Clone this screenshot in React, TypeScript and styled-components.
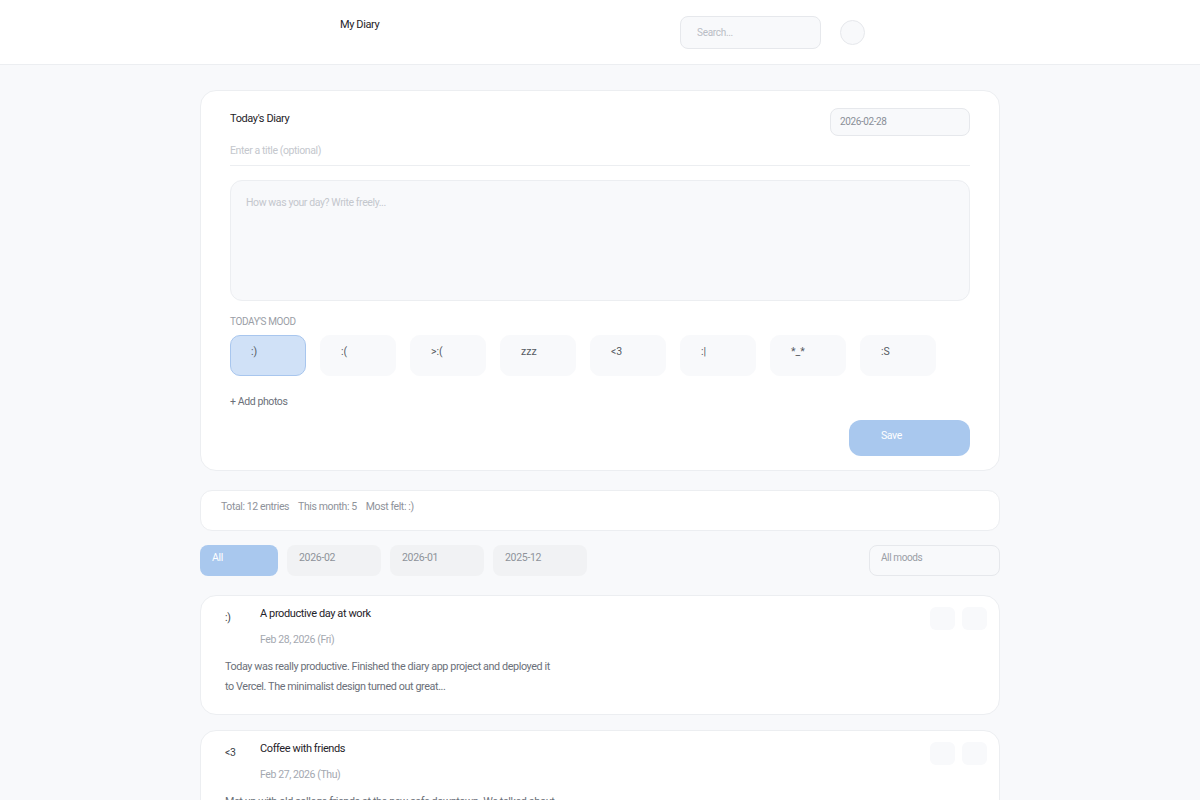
import styled, { createGlobalStyle } from 'styled-components';

const GlobalStyle = createGlobalStyle`
	body {
		margin: 0;
		background: #f8f9fb;
		font-family: Roboto, 'Liberation Sans', sans-serif;
		letter-spacing: -0.4px;
		color: #1f2329;
	}
`;

const moods = [':)', ':(', '>:(', 'zzz', '<3', ':|', '*_*', ':S'];
const months = ['2026-02', '2026-01', '2025-12'];

const entries = [
	{
		mood: ':)',
		title: 'A productive day at work',
		date: 'Feb 28, 2026 (Fri)',
		body: 'Today was really productive. Finished the diary app project and deployed it to Vercel. The minimalist design turned out great...',
	},
	{
		mood: '<3',
		title: 'Coffee with friends',
		date: 'Feb 27, 2026 (Thu)',
		body: 'Met up with old college friends at the new cafe downtown. We talked about everything from work to old memories...',
	},
];

const App = () => {
	return (
		<>
			<GlobalStyle />
			<Header>
				<HeaderInner>
					<Logo>My Diary</Logo>
					<HeaderRight>
						<Search placeholder='Search...' />
						<Avatar />
					</HeaderRight>
				</HeaderInner>
			</Header>

			<Main>
				<Card>
					<CardTop>
						<CardTitle>Today's Diary</CardTitle>
						<DateBox>2026-02-28</DateBox>
					</CardTop>
					<TitleInput placeholder='Enter a title (optional)' />
					<TextArea placeholder='How was your day? Write freely...' />
					<Label>Today's mood</Label>
					<MoodRow>
						{moods.map((m, i) => (
							<MoodButton key={m} $active={i === 0}>
								{m}
							</MoodButton>
						))}
					</MoodRow>
					<AddPhotos>+ Add photos</AddPhotos>
					<SaveRow>
						<SaveButton>Save</SaveButton>
					</SaveRow>
				</Card>

				<Stats>
					<span>Total: 12 entries</span>
					<span>This month: 5</span>
					<span>Most felt: :)</span>
				</Stats>

				<FilterRow>
					<Chips>
						<Chip $active $wide>
							All
						</Chip>
						{months.map((m) => (
							<Chip key={m}>{m}</Chip>
						))}
					</Chips>
					<MoodSelect>All moods</MoodSelect>
				</FilterRow>

				{entries.map((e) => (
					<Entry key={e.title}>
						<EntryHead>
							<EntryMood>{e.mood}</EntryMood>
							<EntryInfo>
								<EntryTitle>{e.title}</EntryTitle>
								<EntryDate>{e.date}</EntryDate>
							</EntryInfo>
							<Actions>
								<ActionBtn />
								<ActionBtn />
							</Actions>
						</EntryHead>
						<EntryBody>{e.body}</EntryBody>
					</Entry>
				))}
			</Main>
		</>
	);
};

export default App;

const Header = styled.header`
	height: 65px;
	background: #fff;
	border-bottom: 1px solid #eceef1;
	box-sizing: border-box;
`;

const HeaderInner = styled.div`
	width: 525px;
	margin-left: 340px;
	display: flex;
	justify-content: space-between;
	align-items: flex-start;
	padding-top: 16px;
`;

const Logo = styled.div`
	font-size: 11px;
	line-height: 17px;
	color: #1f2329;
`;

const HeaderRight = styled.div`
	display: flex;
	align-items: center;
	gap: 19px;
`;

const Search = styled.input`
	width: 141px;
	height: 33px;
	box-sizing: border-box;
	border: 1px solid #e6e8ec;
	border-radius: 8px;
	background: #f8f9fb;
	padding: 0 16px;
	font-family: inherit;
	font-size: 10px;
	letter-spacing: -0.3px;
	outline: none;

	&::placeholder {
		color: #b9bdc5;
	}
`;

const Avatar = styled.div`
	width: 25px;
	height: 25px;
	border-radius: 50%;
	border: 1px solid #e6e8ec;
	background: #f8f9fb;
	box-sizing: border-box;
`;

const Main = styled.main`
	width: 800px;
	margin: 0 auto;
	padding: 25px 0 40px;
	display: flex;
	flex-direction: column;
`;

const Card = styled.section`
	background: #fff;
	border: 1px solid #eceef1;
	border-radius: 16px;
	padding: 17px 29px 14px;
	display: flex;
	flex-direction: column;
`;

const CardTop = styled.div`
	display: flex;
	justify-content: space-between;
	align-items: flex-start;
`;

const CardTitle = styled.h2`
	margin: 4px 0 0;
	font-size: 11px;
	font-weight: 400;
	line-height: 14px;
	color: #1f2329;
`;

const DateBox = styled.div`
	width: 140px;
	height: 28px;
	box-sizing: border-box;
	border: 1px solid #e6e8ec;
	border-radius: 8px;
	background: #f8f9fb;
	padding: 6px 9px;
	font-size: 10px;
	line-height: 14px;
	color: #8a8f98;
`;

const TitleInput = styled.input`
	margin-top: 5px;
	height: 18px;
	border: none;
	border-bottom: 1px solid #eceef1;
	padding: 0 0 6px;
	font-family: inherit;
	font-size: 10.5px;
	letter-spacing: -0.4px;
	outline: none;
	background: transparent;

	&::placeholder {
		color: #c4c7cd;
	}
`;

const TextArea = styled.textarea`
	margin-top: 14px;
	height: 121px;
	box-sizing: border-box;
	border: 1px solid #eceef1;
	border-radius: 12px;
	background: #f8f9fb;
	padding: 15px 15px;
	font-family: inherit;
	font-size: 10.5px;
	letter-spacing: -0.4px;
	resize: none;
	outline: none;

	&::placeholder {
		color: #c4c7cd;
	}
`;

const Label = styled.div`
	margin-top: 15px;
	font-size: 10px;
	line-height: 12px;
	text-transform: uppercase;
	color: #9a9ea6;
`;

const MoodRow = styled.div`
	margin-top: 7px;
	display: flex;
	gap: 14px;
`;

const MoodButton = styled.button<{ $active?: boolean }>`
	width: 76px;
	height: 41px;
	box-sizing: border-box;
	border-radius: 10px;
	border: 1px solid ${(p) => (p.$active ? '#a8c6ee' : '#f8f9fb')};
	background: ${(p) => (p.$active ? '#d0e1f7' : '#f8f9fb')};
	padding: 8px 20px 0;
	text-align: left;
	align-self: flex-start;
	display: flex;
	align-items: flex-start;
	font-family: inherit;
	font-size: 10.5px;
	letter-spacing: 0;
	color: #555a62;
	line-height: 16px;
`;

const AddPhotos = styled.div`
	margin-top: 19px;
	font-size: 10.5px;
	line-height: 14px;
	color: #6b7079;
`;

const SaveRow = styled.div`
	display: flex;
	justify-content: flex-end;
	margin-top: 11px;
`;

const SaveButton = styled.button`
	width: 121px;
	height: 36px;
	border: none;
	border-radius: 12px;
	background: #a9c8ee;
	color: #fff;
	font-family: inherit;
	font-size: 10.5px;
	letter-spacing: -0.4px;
	text-align: left;
	padding: 0 0 6px 32px;
`;

const Stats = styled.div`
	margin-top: 19px;
	height: 41px;
	box-sizing: border-box;
	background: #fff;
	border: 1px solid #eceef1;
	border-radius: 12px;
	padding: 9px 20px;
	display: flex;
	gap: 9px;
	font-size: 10.5px;
	line-height: 14px;
	color: #8e929a;
`;

const FilterRow = styled.div`
	margin-top: 14px;
	display: flex;
	justify-content: space-between;
	align-items: center;
`;

const Chips = styled.div`
	display: flex;
	gap: 9px;
`;

const Chip = styled.button<{ $active?: boolean; $wide?: boolean }>`
	width: ${(p) => (p.$wide ? '78px' : '94px')};
	height: 31px;
	border: none;
	border-radius: 8px;
	background: ${(p) => (p.$active ? '#a9c8ee' : '#f1f2f4')};
	color: ${(p) => (p.$active ? '#fff' : '#8e929a')};
	font-family: inherit;
	font-size: 10.5px;
	letter-spacing: -0.3px;
	text-align: left;
	padding: 0 12px 6px;
`;

const MoodSelect = styled.div`
	width: 131px;
	height: 31px;
	box-sizing: border-box;
	border: 1px solid #e6e8ec;
	border-radius: 8px;
	background: #f8f9fb;
	padding: 5px 11px;
	font-size: 10px;
	line-height: 14px;
	color: #9a9ea6;
`;

const Entry = styled.article`
	margin-top: 19px;
	background: #fff;
	border: 1px solid #eceef1;
	border-radius: 16px;
	padding: 11px 12px 17px 24px;

	& + & {
		margin-top: 15px;
	}
`;

const EntryHead = styled.div`
	display: flex;
	align-items: flex-start;
`;

const EntryMood = styled.div`
	width: 35px;
	margin-top: 4px;
	font-size: 10.5px;
	line-height: 14px;
	color: #3a3f47;
`;

const EntryInfo = styled.div`
	flex: 1;
	display: flex;
	flex-direction: column;
	gap: 12px;
`;

const EntryTitle = styled.div`
	font-size: 11px;
	line-height: 14px;
	color: #1f2329;
`;

const EntryDate = styled.div`
	font-size: 10.5px;
	line-height: 14px;
	color: #a4a8b0;
`;

const Actions = styled.div`
	display: flex;
	gap: 7px;
`;

const ActionBtn = styled.button`
	width: 25px;
	height: 23px;
	border: none;
	border-radius: 6px;
	background: #f8f9fb;
`;

const EntryBody = styled.p`
	margin: 10px 0 0;
	max-width: 330px;
	font-size: 10.8px;
	line-height: 20px;
	color: #6b7079;
`;
